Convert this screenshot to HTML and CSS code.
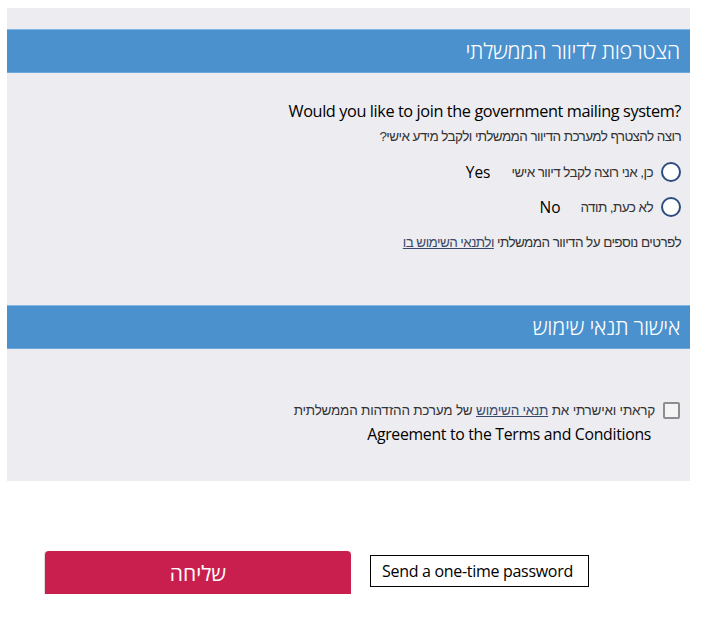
FILE: index.html
```html
<!DOCTYPE html>
<html lang="he">
<head>
<meta charset="utf-8">
<title>הצטרפות לדיוור הממשלתי</title>
<link rel="stylesheet" href="styles.css">
</head>
<body>
<div class="panel" dir="rtl">
  <section class="section mailing">
    <h2 class="bar">הצטרפות לדיוור הממשלתי</h2>
    <div class="body">
      <p class="q" dir="ltr">Would you like to join the government mailing system?</p>
      <p class="sub">רוצה להצטרף למערכת הדיוור הממשלתי ולקבל מידע אישי?</p>
      <label class="radio r1"><span class="circle"></span><span class="he">כן, אני רוצה לקבל דיוור אישי</span><span class="en">Yes</span></label>
      <label class="radio r2"><span class="circle"></span><span class="he">לא כעת, תודה</span><span class="en">No</span></label>
      <p class="more">לפרטים נוספים על הדיוור הממשלתי <a href="#">ולתנאי השימוש בו</a></p>
    </div>
  </section>
  <section class="section terms">
    <h2 class="bar">אישור תנאי שימוש</h2>
    <div class="body body2">
      <label class="check"><span class="box"></span><span class="he">קראתי ואישרתי את <a href="#">תנאי השימוש</a> של מערכת ההזדהות הממשלתית</span></label>
      <p class="agree">Agreement to the Terms and Conditions</p>
    </div>
  </section>
</div>
<div class="actions">
  <button class="submit" type="button">שליחה</button>
  <div class="otp">Send a one-time password</div>
</div>
</body>
</html>
```
FILE: styles.css
```css
html, body { margin: 0; padding: 0; background: #fff; }
body { padding: 8px 0 0 7px; font-family: "Open Sans", "Liberation Sans", sans-serif; }
p { margin: 0; }
.panel { width: 683px; height: 473px; background: #ededf1; padding-top: 21px; box-sizing: border-box; }
.bar {
  margin: 0; height: 44px; box-sizing: border-box;
  background: #4b91cd; border-top: 1px solid #86b6e2; border-bottom: 1px solid #6fa7da;
  color: #fff; font-weight: 300; font-size: 21.7px; line-height: 41px;
  padding-right: 10px; font-family: "Open Sans", "Liberation Sans", sans-serif;
  letter-spacing: -0.3px;
}
.body { padding: 27px 9px 0 0; display: flex; flex-direction: column; align-items: flex-start; }
.q { height: 22px; line-height: 22px; font-size: 16.3px; color: #000; letter-spacing: -0.4px; }
.sub { margin-top: 5px; height: 20px; line-height: 20px; font-size: 13.5px; letter-spacing: -0.6px; color: #333; font-family: "Liberation Sans", sans-serif; }
.radio { display: flex; align-items: center; height: 24px; font-family: "Liberation Sans", sans-serif; font-size: 13.5px; color: #333; }
.radio .he { letter-spacing: -0.57px; }
.r1 { margin-top: 13px; }
.r2 { margin-top: 11px; }
.circle { width: 20px; height: 20px; box-sizing: border-box; border: 2px solid #2d4d7f; border-radius: 50%; background: #fff; }
.he { margin-right: 8px; }
.en { font-family: "Open Sans", sans-serif; font-size: 15.5px; color: #000; }
.r1 .en { margin-right: 21px; }
.r2 .en { margin-right: 20px; }
.more { margin-top: 14px; height: 20px; line-height: 20px; font-size: 13.5px; letter-spacing: -0.58px; color: #333; font-family: "Liberation Sans", sans-serif; }
a { color: #3a4a6a; text-decoration: underline; }
.terms { margin-top: 52px; }
.body2 { padding-top: 51px; }
.check { display: flex; align-items: center; height: 20px; font-family: "Liberation Sans", sans-serif; font-size: 13.5px; letter-spacing: -0.22px; color: #333; }
.box { width: 17px; height: 17px; box-sizing: border-box; border: 2px solid #8d8d8d; border-radius: 2px; background: #f4f4f6; margin-right: 1px; }
.agree { margin-top: 4px; margin-right: 30px; height: 20px; line-height: 20px; font-size: 15.8px; color: #000; letter-spacing: -0.3px; }
.actions { display: flex; align-items: flex-start; margin-top: 70px; padding-left: 38px; }
.submit {
  width: 306px; height: 43px; border: none; border-radius: 4px 4px 0 0;
  background: #c91f4f; color: #fff; font-size: 21px; font-family: "Open Sans", sans-serif;
  box-shadow: -1px 0 1px rgba(0,0,0,0.15); padding: 0;
}
.otp {
  margin-left: 19px; margin-top: 4px; width: 219px; height: 32px; box-sizing: border-box;
  border: 1px solid #000; font-size: 16px; line-height: 30px; padding-left: 11px; color: #000;
  letter-spacing: -0.3px;
}
```
